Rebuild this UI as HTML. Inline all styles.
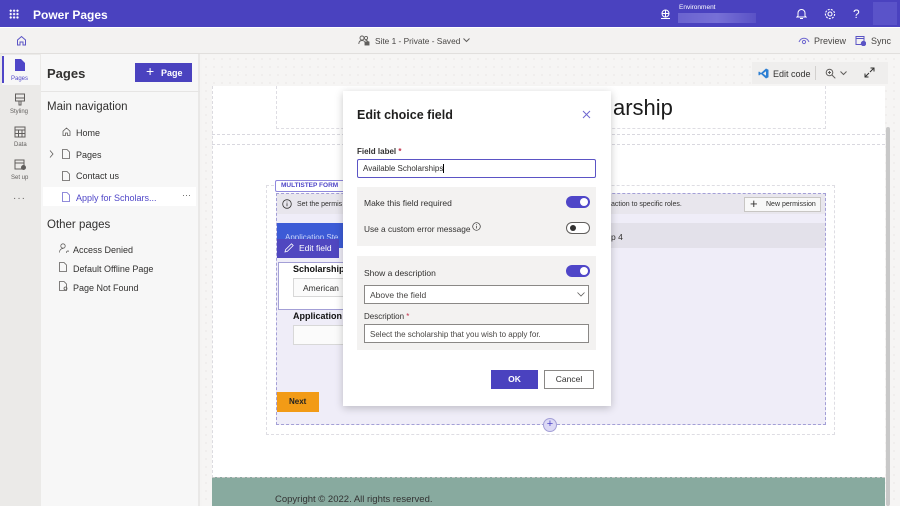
<!DOCTYPE html>
<html><head><meta charset="utf-8">
<style>
*{box-sizing:border-box;margin:0;padding:0}
body{width:900px;height:506px;overflow:hidden;position:relative;font-family:"Liberation Sans",sans-serif;font-size:9px;color:#323130;background:#f5f4f3}
.a{position:absolute}
svg{display:block}
.dot{background-color:#f6f5f4;background-image:radial-gradient(#e0dfdd 0.7px,transparent 0.8px);background-size:8px 8px}
.dash{border:1px dashed #cfcdd8}
.tg{position:absolute;width:24px;height:12px;border-radius:6px}
.tg.on{background:#4f46c8}
.tg.on::after{content:"";position:absolute;right:2px;top:2px;width:8px;height:8px;border-radius:50%;background:#fff}
.tg.off{border:1px solid #605e5c;background:#fff}
.tg.off::after{content:"";position:absolute;left:3px;top:2px;width:6px;height:6px;border-radius:50%;background:#323130}
</style></head><body>
<!-- top bar -->
<div class="a" style="left:0;top:0;width:900px;height:27px;background:#4a42bf"></div>
<div class="a" style="left:9px;top:9px;width:10px;height:10px;background-image:radial-gradient(#fff 1px,transparent 1.2px);background-size:3.4px 3.4px"></div>
<div class="a" style="left:33px;top:8px;color:#fff;font-size:12px;font-weight:bold">Power Pages</div>
<svg class="a" style="left:660px;top:9px" width="11" height="11" viewBox="0 0 11 11" fill="none" stroke="#fff" stroke-width="1"><circle cx="5.5" cy="4.5" r="3.5"/><path d="M2 4.5h7M5.5 1v7M1 9.5h9"/></svg>
<div class="a" style="left:679px;top:4px;color:#fff;font-size:6.5px">Environment</div>
<div class="a" style="left:678px;top:13px;width:78px;height:10px;background:linear-gradient(90deg,#6a63cf,#7770d6,#5a52c6)"></div>
<svg class="a" style="left:796px;top:8px" width="11" height="12" viewBox="0 0 11 12" fill="none" stroke="#fff" stroke-width="1"><path d="M2 8V5a3.5 3.5 0 0 1 7 0v3l1 1H1z M4 10.5h3"/></svg>
<svg class="a" style="left:824px;top:8px" width="12" height="12" viewBox="0 0 12 12" fill="none" stroke="#fff" stroke-width="1.1"><circle cx="6" cy="6" r="2"/><circle cx="6" cy="6" r="4.6" stroke-dasharray="2 1.2"/></svg>
<div class="a" style="left:853px;top:7px;color:#fff;font-size:12px">?</div>
<div class="a" style="left:873px;top:2px;width:24px;height:23px;background:#5a53c9"></div>
<div class="a" style="left:0;top:27px;width:900px;height:1px;background:#fff"></div>
<!-- toolbar -->
<div class="a" style="left:0;top:28px;width:900px;height:26px;background:#f3f2f1;border-bottom:1px solid #e1dfdd"></div>
<svg class="a" style="left:16px;top:35px" width="11" height="11" viewBox="0 0 11 11" fill="none" stroke="#5b54c5" stroke-width="1"><path d="M1.5 5L5.5 1.5 9.5 5V10H7V7H4V10H1.5z"/></svg>
<svg class="a" style="left:358px;top:35px" width="12" height="11" viewBox="0 0 12 11" fill="none" stroke="#605e5c" stroke-width="0.9"><circle cx="4" cy="3" r="2"/><circle cx="8" cy="3" r="1.6"/><path d="M0.8 9c0-2.5 1.5-3.5 3.2-3.5S7 6.5 7 8M7.5 5.5c1.5 0 2.5 0.6 3 2"/><rect x="7" y="7" width="4" height="3" fill="#605e5c"/></svg>
<div class="a" style="left:375px;top:36px;font-size:8.3px;color:#484644">Site 1 - Private - Saved</div>
<svg class="a" style="left:463px;top:38px" width="7" height="5" viewBox="0 0 7 5" fill="none" stroke="#605e5c"><path d="M0.5 0.5L3.5 3.5 6.5 0.5"/></svg>
<svg class="a" style="left:798px;top:36px" width="12" height="9" viewBox="0 0 12 9" fill="none" stroke="#6f68d0" stroke-width="1"><path d="M1 6c2-5 8-5 10 0"/><circle cx="6" cy="6" r="1.6"/></svg>
<div class="a" style="left:814px;top:36px;font-size:9px;color:#484644">Preview</div>
<svg class="a" style="left:855px;top:35px" width="11" height="11" viewBox="0 0 11 11" fill="none" stroke="#5b54c5" stroke-width="1"><rect x="1" y="1.5" width="8" height="8"/><path d="M1 3.5h8"/><circle cx="8.5" cy="8.5" r="2.2" fill="#5b54c5"/></svg>
<div class="a" style="left:871px;top:36px;font-size:9px;color:#484644">Sync</div>
<!-- left rail -->
<div class="a" style="left:0;top:54px;width:41px;height:452px;background:#ebeae8"></div>
<div class="a" style="left:2px;top:55px;width:38px;height:30px;background:#f7f7f7"></div>
<div class="a" style="left:2px;top:56px;width:2px;height:27px;background:#4f46c8"></div>
<svg class="a" style="left:15px;top:59px" width="10" height="12" viewBox="0 0 10 12"><path d="M0 0h6l4 4v8H0z" fill="#4f46c8"/></svg>
<div class="a" style="left:11px;top:76px;font-size:6px;color:#4f46c8">Pages</div>
<svg class="a" style="left:14px;top:93px" width="12" height="13" viewBox="0 0 12 13" fill="none" stroke="#605e5c"><rect x="1.5" y="1" width="9" height="7"/><path d="M1.5 5h9M5 8v4h2V8"/></svg>
<div class="a" style="left:10px;top:109px;font-size:6px;color:#605e5c">Styling</div>
<svg class="a" style="left:14px;top:126px" width="12" height="12" viewBox="0 0 12 12" fill="none" stroke="#605e5c"><rect x="1" y="1" width="10" height="10"/><path d="M1 4h10M1 7.5h10M4.5 4v7M8 4v7"/></svg>
<div class="a" style="left:14px;top:142px;font-size:6px;color:#605e5c">Data</div>
<svg class="a" style="left:14px;top:159px" width="13" height="12" viewBox="0 0 13 12" fill="none" stroke="#605e5c"><rect x="1" y="1" width="9" height="9"/><path d="M1 4h9"/><circle cx="9.5" cy="8.5" r="2" fill="#605e5c"/></svg>
<div class="a" style="left:11px;top:175px;font-size:6px;color:#605e5c">Set up</div>
<div class="a" style="left:13px;top:193px;font-size:10px;color:#605e5c;letter-spacing:1px">···</div>
<!-- pages panel -->
<div class="a" style="left:41px;top:54px;width:159px;height:452px;background:#f7f7f7;border-right:2px solid #e9e8e7"></div>
<div class="a" style="left:47px;top:66px;font-size:13px;font-weight:bold;color:#323130">Pages</div>
<div class="a" style="left:135px;top:63px;width:57px;height:19px;background:#4a42bf;color:#fff;font-size:9px;font-weight:bold;padding:4px 0 0 12px"><span style="font-size:14px;font-weight:normal;position:absolute;left:11px;top:0px">+</span><span style="position:absolute;left:26px;top:5px">Page</span></div>
<div class="a" style="left:41px;top:91px;width:159px;height:1px;background:#e6e5e4"></div>
<div class="a" style="left:47px;top:101px;font-size:11.5px;color:#323130">Main navigation</div>
<svg class="a" style="left:62px;top:127px" width="9" height="9" viewBox="0 0 9 9" fill="none" stroke="#605e5c" stroke-width="0.8"><path d="M1 4.2L4.5 1 8 4.2V8.5H5.5V6h-2v2.5H1z"/></svg>
<div class="a" style="left:76px;top:128px">Home</div>
<svg class="a" style="left:49px;top:150px" width="5" height="8" viewBox="0 0 5 8" fill="none" stroke="#605e5c" stroke-width="0.8"><path d="M1 0.5l3 3.5-3 3.5"/></svg>
<svg class="a" style="left:62px;top:149px" width="8" height="10" viewBox="0 0 8 10" fill="none" stroke="#605e5c" stroke-width="0.8"><path d="M0.5 0.5h4.5l2.5 2.5v6.5h-7z"/></svg>
<div class="a" style="left:76px;top:150px">Pages</div>
<svg class="a" style="left:62px;top:171px" width="8" height="10" viewBox="0 0 8 10" fill="none" stroke="#605e5c" stroke-width="0.8"><path d="M0.5 0.5h4.5l2.5 2.5v6.5h-7z"/></svg>
<div class="a" style="left:76px;top:171px">Contact us</div>
<div class="a" style="left:43px;top:187px;width:153px;height:19px;background:#fff"></div>
<svg class="a" style="left:62px;top:192px" width="8" height="10" viewBox="0 0 8 10" fill="none" stroke="#6f68d0" stroke-width="0.8"><path d="M0.5 0.5h4.5l2.5 2.5v6.5h-7z"/></svg>
<div class="a" style="left:76px;top:193px;color:#4f46c8">Apply for Scholars...</div>
<div class="a" style="left:182px;top:190px;color:#605e5c;font-size:9px">···</div>
<div class="a" style="left:47px;top:219px;font-size:11.5px;color:#323130">Other pages</div>
<svg class="a" style="left:59px;top:243px" width="10" height="10" viewBox="0 0 10 10" fill="none" stroke="#605e5c" stroke-width="0.8"><circle cx="4" cy="3" r="2.2"/><path d="M0.5 9.5c0-3 2-4 3.5-4M7.5 9.5a1.5 1.5 0 1 0 0-0.1"/></svg>
<div class="a" style="left:73px;top:245px">Access Denied</div>
<svg class="a" style="left:59px;top:262px" width="8" height="10" viewBox="0 0 8 10" fill="none" stroke="#605e5c" stroke-width="0.8"><path d="M0.5 0.5h4.5l2.5 2.5v6.5h-7z"/></svg>
<div class="a" style="left:73px;top:264px">Default Offline Page</div>
<svg class="a" style="left:59px;top:281px" width="9" height="10" viewBox="0 0 9 10" fill="none" stroke="#605e5c" stroke-width="0.8"><path d="M0.5 0.5h4.5l2.5 2.5v6.5h-7z"/><circle cx="6.5" cy="7.5" r="1.5"/></svg>
<div class="a" style="left:73px;top:283px">Page Not Found</div>
<!-- canvas -->
<div class="a dot" style="left:202px;top:55px;width:698px;height:451px"></div>
<div class="a" style="left:212px;top:86px;width:673px;height:392px;background:#fff;border-left:1px dashed #dcdbe0"></div>
<div class="a" style="left:752px;top:62px;width:136px;height:22px;background:#efeeed"></div>
<svg class="a" style="left:758px;top:68px" width="11" height="11" viewBox="0 0 11 11"><path d="M8 0.5L10.5 1.7V9.3L8 10.5 3 6 1 7.5 0.5 7V4L1 3.5 3 5z M8 3.3L5 5.5 8 7.7z" fill="#2d7fd3"/></svg>
<div class="a" style="left:773px;top:69px;font-size:9px;color:#323130">Edit code</div>
<div class="a" style="left:815px;top:66px;width:1px;height:14px;background:#d2d0ce"></div>
<svg class="a" style="left:825px;top:68px" width="11" height="11" viewBox="0 0 11 11" fill="none" stroke="#605e5c"><circle cx="4.5" cy="4.5" r="3.3"/><path d="M7 7l3.3 3.3M3 4.5h3M4.5 3v3"/></svg>
<svg class="a" style="left:840px;top:71px" width="7" height="5" viewBox="0 0 7 5" fill="none" stroke="#605e5c"><path d="M0.5 0.5L3.5 3.5 6.5 0.5"/></svg>
<svg class="a" style="left:864px;top:67px" width="11" height="11" viewBox="0 0 11 11" fill="none" stroke="#323130"><path d="M6.5 1h3.5v3.5M10 1L6 5M4.5 10H1V6.5M1 10l4-4"/></svg>
<!-- page -->
<div class="a dash" style="left:276px;top:86px;width:550px;height:43px;border-color:#dedde3;border-top:none"></div>
<div class="a" style="left:613px;top:95px;font-size:22px;color:#1b1b1b">arship</div>
<div class="a" style="left:212px;top:134px;width:673px;height:1px;border-top:1px dashed #d9d8df"></div>
<div class="a" style="left:212px;top:144px;width:673px;height:1px;border-top:1px dashed #d9d8df"></div>
<div class="a dash" style="left:266px;top:185px;width:569px;height:250px;border-color:#dedde3"></div>
<div class="a" style="left:276px;top:193px;width:550px;height:232px;background:#efedf8;border:1px dashed #a39fd6"></div>
<div class="a" style="left:275px;top:180px;width:70px;height:12px;background:#fff;border:1px solid #8f88dd;border-radius:2px;font-size:6.5px;font-weight:bold;color:#4f46c8;padding:1px 0 0 5px">MULTISTEP FORM</div>
<div class="a" style="left:277px;top:194px;width:548px;height:20px;background:#e8e6ed"></div>
<svg class="a" style="left:282px;top:199px" width="10" height="10" viewBox="0 0 10 10" fill="none" stroke="#323130" stroke-width="0.8"><circle cx="5" cy="5" r="4.3"/><path d="M5 4.2v3M5 2.6v0.8"/></svg>
<div class="a" style="left:297px;top:201px;font-size:7px">Set the permis</div>
<div class="a" style="left:611px;top:201px;font-size:7px">action to specific roles.</div>
<div class="a" style="left:744px;top:197px;width:77px;height:15px;background:#f8f8f8;border:1px solid #c8c6c4;font-size:7px;padding:3px 0 0 21px">New permission<span style="position:absolute;left:5px;top:-2px;font-size:13px">+</span></div>
<div class="a" style="left:277px;top:223px;width:548px;height:25px;background:#e3e1ea"></div>
<div class="a" style="left:277px;top:223px;width:70px;height:25px;background:#3c5bd6;color:#c9d2f7;font-size:8px;padding:10px 0 0 8px">Application Ste</div>
<div class="a" style="left:611px;top:232px;font-size:8.5px">p 4</div>
<div class="a" style="left:277px;top:239px;width:62px;height:19px;background:#5047c0;color:#fff;font-size:8.5px;padding:4px 0 0 22px">Edit field</div>
<svg class="a" style="left:284px;top:243px" width="10" height="10" viewBox="0 0 10 10" fill="none" stroke="#fff" stroke-width="0.8"><path d="M1 9l0.6-2.4L7.5 0.8 9.2 2.5 3.3 8.4z"/></svg>
<div class="a" style="left:278px;top:262px;width:67px;height:48px;border:1px solid #a39fd6;background:#fff;border-right:none"></div>
<div class="a" style="left:293px;top:264px;font-size:9px;font-weight:bold;color:#111">Scholarship</div>
<div class="a" style="left:293px;top:278px;width:55px;height:19px;border:1px solid #d8d8d8;background:#fbfbfb;font-size:8.5px;padding:4px 0 0 9px">American</div>
<div class="a" style="left:293px;top:311px;font-size:9px;font-weight:bold;color:#111">Application</div>
<div class="a" style="left:293px;top:325px;width:55px;height:20px;border:1px solid #d8d8d8;background:#fbfbfb"></div>
<div class="a" style="left:277px;top:392px;width:42px;height:20px;background:#f29b16;font-size:8px;font-weight:bold;color:#222;padding:5px 0 0 12px">Next</div>
<div class="a" style="left:543px;top:418px;width:14px;height:14px;border-radius:50%;background:#dcd9f5;border:1px solid #a39fd6;color:#4f46c8;font-size:11px;line-height:11px;text-align:center">+</div>
<!-- footer -->
<div class="a" style="left:212px;top:477px;width:673px;height:29px;background:#88aa9f;border-top:1px dashed #c8c8c8"></div>
<div class="a" style="left:275px;top:494px;font-size:9.5px;color:#333">Copyright © 2022. All rights reserved.</div>
<div class="a" style="left:886px;top:127px;width:4px;height:379px;background:#c8c8c8;border-radius:2px"></div>
<!-- dialog -->
<div class="a" style="left:343px;top:91px;width:268px;height:315px;background:#fff;box-shadow:0 2px 8px rgba(0,0,0,0.22)"></div>
<div class="a" style="left:357px;top:108px;font-size:12.5px;font-weight:bold;color:#201f1e">Edit choice field</div>
<svg class="a" style="left:582px;top:110px" width="9" height="9" viewBox="0 0 9 9" stroke="#6f68d0" stroke-width="1"><path d="M1 1l7 7M8 1L1 8"/></svg>
<div class="a" style="left:357px;top:147px;font-size:8px;font-weight:bold;color:#323130">Field label <span style="color:#c4314b">*</span></div>
<div class="a" style="left:357px;top:159px;width:239px;height:19px;border:1.5px solid #5b54c5;border-radius:2px;font-size:8px;padding:4px 0 0 5px;color:#323130">Available Scholarships<span style="border-left:1px solid #000;margin-left:0"></span></div>
<div class="a" style="left:357px;top:187px;width:239px;height:59px;background:#f3f2f1"></div>
<div class="a" style="left:364px;top:198px;font-size:8.5px">Make this field required</div>
<div class="tg on" style="left:566px;top:196px"></div>
<div class="a" style="left:364px;top:224px;font-size:8.3px">Use a custom error message</div>
<svg class="a" style="left:472px;top:222px" width="9" height="9" viewBox="0 0 9 9" fill="none" stroke="#323130" stroke-width="0.7"><circle cx="4.5" cy="4.5" r="3.8"/><path d="M4.5 3.8v2.7M4.5 2.3v0.7"/></svg>
<div class="tg off" style="left:566px;top:222px"></div>
<div class="a" style="left:357px;top:256px;width:239px;height:94px;background:#f3f2f1"></div>
<div class="a" style="left:364px;top:268px;font-size:8.5px">Show a description</div>
<div class="tg on" style="left:566px;top:265px"></div>
<div class="a" style="left:364px;top:285px;width:225px;height:19px;border:1px solid #8a8886;background:#fff;font-size:8.5px;padding:4px 0 0 5px;color:#484644">Above the field</div>
<svg class="a" style="left:577px;top:292px" width="8" height="5" viewBox="0 0 8 5" fill="none" stroke="#605e5c" stroke-width="0.8"><path d="M0.5 0.5L4 4 7.5 0.5"/></svg>
<div class="a" style="left:364px;top:312px;font-size:8px;color:#323130">Description <span style="color:#c4314b">*</span></div>
<div class="a" style="left:364px;top:324px;width:225px;height:19px;border:1px solid #8a8886;background:#fff;font-size:8px;padding:5px 0 0 5px;color:#484644">Select the scholarship that you wish to apply for.</div>
<div class="a" style="left:491px;top:370px;width:47px;height:19px;background:#4a42bf;color:#fff;font-size:8.5px;font-weight:bold;text-align:center;line-height:19px">OK</div>
<div class="a" style="left:544px;top:370px;width:50px;height:19px;border:1px solid #8a8886;background:#fff;font-size:8.5px;text-align:center;line-height:17px">Cancel</div>
</body></html>
